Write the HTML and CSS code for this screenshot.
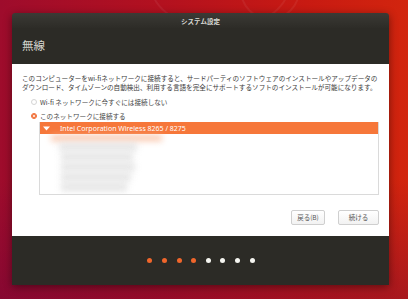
FILE: index.html
```html
<!DOCTYPE html>
<html lang="ja">
<head>
<meta charset="utf-8">
<link rel="stylesheet" href="styles.css">
</head>
<body>
<div class="desktop">
  <div class="streak s1"></div>
  <div class="streak s2"></div>
  <div class="window">
    <div class="titlebar">システム設定</div>
    <div class="header"><h1>無線</h1></div>
    <div class="content">
      <p class="intro">このコンピューターをwi-fiネットワークに接続すると、サードパーティのソフトウェアのインストールやアップデータのダウンロード、タイムゾーンの自動検出、利用する言語を完全にサポートするソフトのインストールが可能になります。</p>
      <div class="radio-row"><span class="radio"></span><span class="radio-label">Wi-fi ネットワークに今すぐには接続しない</span></div>
      <div class="radio-row"><span class="radio checked"></span><span class="radio-label">このネットワークに接続する</span></div>
      <div class="list">
        <div class="list-head">
          <svg class="tri" width="7" height="5" viewBox="0 0 7 5"><path d="M0 0.5 L7 0.5 L3.5 4.5 Z" fill="#fff"/></svg>
          <span class="dev">Intel Corporation Wireless 8265 / 8275</span>
        </div>
        <div class="blurred">
          <div class="b b0"></div>
          <div class="b b1"></div>
          <div class="b b2"></div>
          <div class="b b3"></div>
          <div class="b b4"></div>
          <div class="b b5"></div>
        </div>
      </div>
      <div class="buttons">
        <button class="btn">戻る(B)</button>
        <button class="btn">続ける</button>
      </div>
    </div>
    <div class="footer">
      <span class="dot on"></span><span class="dot on"></span><span class="dot on"></span><span class="dot on"></span>
      <span class="dot"></span><span class="dot"></span><span class="dot"></span><span class="dot"></span>
    </div>
  </div>
</div>
</body>
</html>
```
FILE: styles.css
```css
* { box-sizing: border-box; }
html, body { margin: 0; padding: 0; }
body {
  width: 408px;
  height: 299px;
  overflow: hidden;
  font-family: "Noto Sans CJK JP", "Noto Sans", sans-serif;
}
.desktop {
  position: relative;
  width: 408px;
  height: 299px;
  padding: 13px 0 0 12px;
  background:
    linear-gradient(180deg, rgba(0,0,0,0) 60%, rgba(90,0,60,0.35) 100%),
    linear-gradient(90deg, #9e0c2c 0%, #b3111f 40%, #c81a12 75%, #d2250e 100%);
}
.streak {
  position: absolute;
  border-radius: 50%;
  border: 2px solid rgba(255,255,255,0.06);
}
.s1 { left: 150px; top: -60px; width: 140px; height: 90px; }
.s2 { left: 240px; top: -40px; width: 60px; height: 60px; }
.window {
  position: relative;
  width: 377px;
  height: 272px;
  display: flex;
  flex-direction: column;
  border-radius: 3px 3px 0 0;
  overflow: hidden;
  box-shadow: 0 2px 8px rgba(0,0,0,0.45);
}
.titlebar {
  height: 15px;
  background: linear-gradient(180deg, #3b3a35 0%, #2d2c27 100%);
  color: #dcdcd6;
  font-size: 6.5px;
  font-weight: bold;
  display: flex;
  align-items: center;
  justify-content: center;
  padding-top: 1px;
}
.header {
  height: 36px;
  background: #2c2b26;
  display: flex;
  align-items: center;
  padding-left: 10px;
  padding-bottom: 2px;
}
.header h1 {
  margin: 0;
  font-size: 11.5px;
  font-weight: normal;
  color: #d6d6ce;
  letter-spacing: 0;
}
.content {
  height: 172px;
  background: #ffffff;
  padding: 10px 10px 0 10px;
  display: flex;
  flex-direction: column;
  color: #3c3c3c;
}
.intro {
  margin: 0;
  font-size: 6.6px;
  line-height: 9px;
  color: #3a3a3a;
}
.radio-row {
  display: flex;
  align-items: center;
  height: 10px;
  margin-top: 5px;
  padding-left: 8.5px;
  font-size: 6.6px;
}
.radio-row + .radio-row { margin-top: 4px; }
.radio {
  width: 6px;
  height: 6px;
  border-radius: 50%;
  border: 1px solid #d4d4d4;
  background: #fff;
  margin-right: 3.5px;
}
.radio.checked {
  border: 1.5px solid #f0662b;
  background: #fff;
  box-shadow: inset 0 0 0 1px #f0662b;
}
.radio-label { color: #454545; }
.list {
  margin: 1px 0 0 17px;
  width: 340px;
  height: 73px;
  border: 1px solid #dadada;
  border-top: none;
  background: #fff;
  display: flex;
  flex-direction: column;
  overflow: hidden;
}
.list-head {
  height: 12px;
  background: #f6773a;
  display: flex;
  align-items: center;
  color: #fff;
  font-family: "Noto Sans", sans-serif;
  font-size: 7px;
  padding-left: 3px;
}
.tri { margin-right: 10px; }
.dev { letter-spacing: 0; }
.blurred {
  position: relative;
  flex: 1;
  padding: 1px 0 0 11px;
  display: flex;
  flex-direction: column;
  gap: 2px;
}
.b {
  height: 8px;
  background: #dcdcdc;
  filter: blur(3px);
  opacity: 0.75;
}
.b0 { width: 111px; height: 6px; background: #f8b592; margin-left: 0; }
.b1 { width: 78px; margin-left: 8px; }
.b2 { width: 72px; margin-left: 10px; }
.b3 { width: 74px; margin-left: 10px; }
.b4 { width: 70px; margin-left: 10px; }
.b5 { width: 66px; margin-left: 10px; }
.buttons {
  display: flex;
  justify-content: flex-end;
  gap: 13px;
  margin-top: 15px;
}
.btn {
  height: 15px;
  padding: 0 9px;
  border: 1px solid #cfcfcf;
  border-radius: 2px;
  background: linear-gradient(180deg, #ffffff, #f2f2f2);
  font-family: "Noto Sans CJK JP", sans-serif;
  font-size: 6.5px;
  color: #555;
  line-height: 1;
}
.btn:first-child { width: 34px; padding: 0; }
.btn:last-child { width: 41px; padding: 0; }
.footer {
  flex: 1;
  background: #2c2b26;
  display: flex;
  align-items: center;
  justify-content: center;
  gap: 9.6px;
  padding-left: 1px;
  padding-bottom: 1px;
}
.dot {
  width: 5px;
  height: 5px;
  border-radius: 50%;
  background: #f5f5f0;
}
.dot.on { background: #f0662b; }
```
